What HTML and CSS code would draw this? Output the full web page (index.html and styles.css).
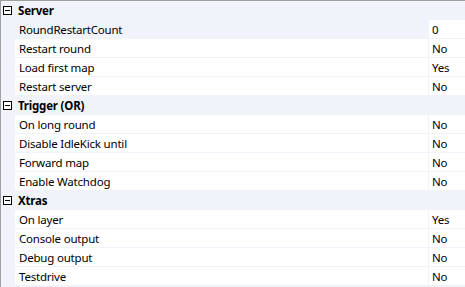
FILE: index.html
```html
<!DOCTYPE html>
<html lang="en">
<head>
  <meta charset="UTF-8" />
  <title>Properties</title>
  <link rel="stylesheet" href="styles.css">
</head>
<body>
  <div class="grid">
    <div class="cat"><span class="toggle"></span><span class="cat-name">Server</span></div>
    <div class="row selected"><span class="gut"></span><span class="name">RoundRestartCount</span><span class="val">0</span></div>
    <div class="row"><span class="gut"></span><span class="name">Restart round</span><span class="val">No</span></div>
    <div class="row"><span class="gut"></span><span class="name">Load first map</span><span class="val">Yes</span></div>
    <div class="row"><span class="gut"></span><span class="name">Restart server</span><span class="val">No</span></div>

    <div class="cat"><span class="toggle"></span><span class="cat-name">Trigger (OR)</span></div>
    <div class="row"><span class="gut"></span><span class="name">On long round</span><span class="val">No</span></div>
    <div class="row"><span class="gut"></span><span class="name">Disable IdleKick until</span><span class="val">No</span></div>
    <div class="row"><span class="gut"></span><span class="name">Forward map</span><span class="val">No</span></div>
    <div class="row"><span class="gut"></span><span class="name">Enable Watchdog</span><span class="val">No</span></div>

    <div class="cat"><span class="toggle"></span><span class="cat-name">Xtras</span></div>
    <div class="row"><span class="gut"></span><span class="name">On layer</span><span class="val">Yes</span></div>
    <div class="row"><span class="gut"></span><span class="name">Console output</span><span class="val">No</span></div>
    <div class="row"><span class="gut"></span><span class="name">Debug output</span><span class="val">No</span></div>
    <div class="row"><span class="gut"></span><span class="name">Testdrive</span><span class="val">No</span></div>
  </div>
</body>
</html>
```

FILE: styles.css
```css
* { box-sizing: border-box; }
html, body {
  margin: 0; padding: 0;
  background: #fff;
  font-family: "Noto Sans", "Open Sans", sans-serif;
  font-size: 11.5px;
  letter-spacing: -0.2px;
  color: #000;
}
.grid {
  width: 465px;
  height: 287px;
  border-top: 1px solid #a0a0a0;
  border-left: 1px solid #a0a0a0;
  background: #f0f3f9;
  overflow: hidden;
}
.cat, .row {
  display: flex;
  align-items: stretch;
  height: 19px;
  border-bottom: 1px solid #f0f3f9;
  line-height: 19px;
}
.cat { align-items: center; }
.toggle {
  position: relative;
  width: 9px;
  height: 9px;
  margin: 1px 6px 0 2px;
  border: 1px solid #000;
  background: #fff;
}
.toggle::after {
  content: "";
  position: absolute;
  left: 1px; right: 1px; top: 3px;
  height: 1px;
  background: #000;
}
.cat-name { font-weight: bold; }
.gut { width: 14px; flex: none; }
.name {
  flex: 1;
  background: #fff;
  padding-left: 4px;
  white-space: nowrap;
}
.selected .name { background: #f0f3f9; }
.val {
  width: 37px;
  flex: none;
  background: #fff;
  border-left: 1px solid #f0f3f9;
  padding-left: 3px;
}
```
